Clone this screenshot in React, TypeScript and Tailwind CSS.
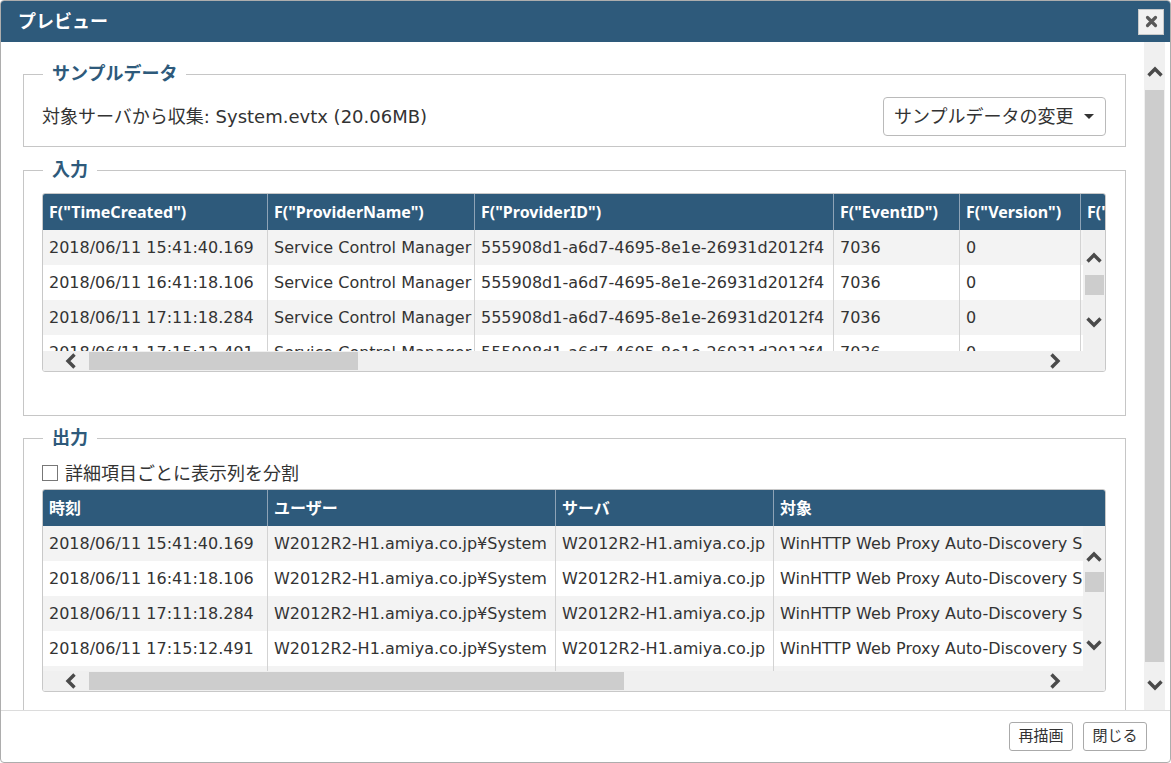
import React from 'react';

type Dir = 'up' | 'down' | 'left' | 'right';

function Chevron({ dir }: { dir: Dir }) {
  const pts = {
    up: '1.5,11.5 8,5 14.5,11.5',
    down: '1.5,4.5 8,11 14.5,4.5',
    left: '11.5,1.5 5,8 11.5,14.5',
    right: '4.5,1.5 11,8 4.5,14.5',
  }[dir];
  return (
    <svg width="16" height="16" viewBox="0 0 16 16" className="block shrink-0">
      <polyline points={pts} fill="none" stroke="#4a4a4a" strokeWidth="3.4" />
    </svg>
  );
}

interface GridProps {
  cols: string[]; // width classes, last one is flex-1
  header: string[];
  rows: string[][];
  bodyH: string;
  thumbW: string;
  vbar: { top: string; thumb: string; down: string };
}

function Grid({ cols, header, rows, bodyH, thumbW, vbar }: GridProps) {
  return (
    <div className="w-full min-w-0 border border-[#c8c8c8] rounded-[3px] overflow-hidden bg-white">
      {/* header */}
      <div className="flex h-[36px] bg-[#2e5a7b]">
        {header.map((h, i) => (
          <div
            key={i}
            className={`${cols[i]} h-full flex items-center pl-[6px] text-white font-bold text-[16px] font-['Noto_Sans','Noto_Sans_CJK_JP',sans-serif] whitespace-nowrap overflow-hidden ${
              i < header.length - 1 ? 'border-r border-[#8ea3b6]' : ''
            }`}
          >
            {h}
          </div>
        ))}
      </div>
      {/* body */}
      <div className={`flex ${bodyH}`}>
        <div className="flex-1 min-w-0 overflow-hidden">
          {rows.map((r, ri) => (
            <div key={ri} className={`flex h-[35px] ${ri % 2 === 0 ? 'bg-[#f3f3f3]' : 'bg-white'}`}>
              {r.map((c, ci) => (
                <div
                  key={ci}
                  className={`${cols[ci]} h-full flex items-center pl-[6px] text-[16px] whitespace-nowrap overflow-hidden ${
                    ci < r.length - 1 ? 'border-r border-[#d3d3d3]' : ''
                  }`}
                >
                  {c}
                </div>
              ))}
            </div>
          ))}
        </div>
        <div className={`w-[22px] shrink-0 bg-[#f0f0f0] flex flex-col items-center ${vbar.top}`}>
          <Chevron dir="up" />
          <div className={`w-[19px] h-[20px] bg-[#cdcdcd] ${vbar.thumb}`} />
          <div className={vbar.down}>
            <Chevron dir="down" />
          </div>
        </div>
      </div>
      {/* horizontal scrollbar */}
      <div className="h-[20px] bg-[#f0f0f0] flex items-center pl-[20px] pr-[42px]">
        <Chevron dir="left" />
        <div className={`ml-[10px] h-[18px] bg-[#cdcdcd] ${thumbW}`} />
        <div className="flex-1" />
        <Chevron dir="right" />
      </div>
    </div>
  );
}

function Legend({ children }: { children: React.ReactNode }) {
  return (
    <legend className="ml-[1px] px-[9px] leading-[24px] text-[18px] font-bold text-[#2e5a7b]">
      {children}
    </legend>
  );
}

const times = [
  '2018/06/11 15:41:40.169',
  '2018/06/11 16:41:18.106',
  '2018/06/11 17:11:18.284',
  '2018/06/11 17:15:12.491',
  '2018/06/11 17:45:12.630',
];

const inputRows = times
  .slice(0, 4)
  .map((t) => [t, 'Service Control Manager', '555908d1-a6d7-4695-8e1e-26931d2012f4', '7036', '0', '4']);

const outputRows = times.map((t) => [
  t,
  'W2012R2-H1.amiya.co.jp¥System',
  'W2012R2-H1.amiya.co.jp',
  'WinHTTP Web Proxy Auto-Discovery Service',
]);

export default function App() {
  return (
    <div className="w-[1171px] h-[763px] flex flex-col bg-white border border-[#adadad] rounded-[4px] overflow-hidden text-[#333] font-['DejaVu_Sans','Noto_Sans_CJK_JP',sans-serif]">
      {/* title bar */}
      <div className="h-[41px] shrink-0 bg-[#2e5a7b] flex items-center justify-between pl-[17px] pr-[6px]">
        <span className="text-white text-[18px] font-bold">プレビュー</span>
        <button className="w-[26px] h-[26px] bg-[#f1f1f1] border border-[#c9c9c9] flex items-center justify-center">
          <svg width="13" height="13" viewBox="0 0 13 13">
            <path d="M2.5 2.5 L10.5 10.5 M10.5 2.5 L2.5 10.5" stroke="#595959" strokeWidth="3.2" strokeLinecap="round" />
          </svg>
        </button>
      </div>

      {/* body */}
      <div className="h-[668px] shrink-0 flex overflow-hidden">
        <div className="w-[1125px] shrink-0 pl-[22px] pt-[20px] flex flex-col overflow-hidden">
          <fieldset className="w-[1103px] min-w-0 border border-[#c6c6c6] pl-[18px] pr-[19px] pb-[10px]">
            <Legend>サンプルデータ</Legend>
            <div className="mt-[11px] h-[39px] flex items-center justify-between">
              <span className="text-[18px]">対象サーバから収集: System.evtx (20.06MB)</span>
              <button className="w-[223px] h-[39px] border border-[#bababa] rounded-[4px] bg-white flex items-center justify-between pl-[10px] pr-[11px] text-[18px]">
                <span>サンプルデータの変更</span>
                <span className="w-0 h-0 border-l-[5px] border-r-[5px] border-t-[5px] border-l-transparent border-r-transparent border-t-[#333]" />
              </button>
            </div>
          </fieldset>

          <fieldset className="mt-[11px] w-[1103px] min-w-0 border border-[#c6c6c6] pl-[18px] pr-[19px] pb-[43px]">
            <Legend>入力</Legend>
            <div className="mt-[11px] min-w-0">
              <Grid
                cols={['w-[225px] shrink-0', 'w-[207px] shrink-0', 'w-[359px] shrink-0', 'w-[126px] shrink-0', 'w-[121px] shrink-0', 'flex-1 min-w-0']}
                header={['F("TimeCreated")', 'F("ProviderName")', 'F("ProviderID")', 'F("EventID")', 'F("Version")', 'F("Level")']}
                rows={inputRows}
                bodyH="h-[121px]"
                thumbW="w-[269px]"
                vbar={{ top: 'pt-[20px]', thumb: 'mt-[9px]', down: 'mt-[19px]' }}
              />
            </div>
          </fieldset>

          <fieldset className="mt-[10px] w-[1103px] min-w-0 border border-[#c6c6c6] pl-[18px] pr-[19px] pb-[40px]">
            <Legend>出力</Legend>
            <div className="mt-[11px] h-[24px] flex items-center">
              <span className="w-[16px] h-[16px] border border-[#777] bg-white" />
              <span className="ml-[7px] text-[18px]">詳細項目ごとに表示列を分割</span>
            </div>
            <div className="mt-[4px] min-w-0">
              <Grid
                cols={['w-[225px] shrink-0', 'w-[288px] shrink-0', 'w-[218px] shrink-0', 'flex-1 min-w-0']}
                header={['時刻', 'ユーザー', 'サーバ', '対象']}
                rows={outputRows}
                bodyH="h-[145px]"
                thumbW="w-[535px]"
                vbar={{ top: 'pt-[23px]', thumb: 'mt-[7px]', down: 'mt-[45px]' }}
              />
            </div>
          </fieldset>
        </div>

        {/* main vertical scrollbar */}
        <div className="ml-[18px] w-[21px] h-full bg-[#f0f0f0] flex flex-col items-center pt-[22px]">
          <Chevron dir="up" />
          <div className="mt-[10px] w-[19px] h-[572px] bg-[#cdcdcd]" />
          <div className="mt-[15px]">
            <Chevron dir="down" />
          </div>
        </div>
      </div>

      {/* footer */}
      <div className="flex-1 border-t border-[#dcdcdc] flex items-center justify-end gap-[10px] pr-[23px]">
        <button className="w-[64px] h-[29px] border border-[#aaa] rounded-[3px] bg-white text-[15px]">再描画</button>
        <button className="w-[64px] h-[29px] border border-[#aaa] rounded-[3px] bg-white text-[15px]">閉じる</button>
      </div>
    </div>
  );
}
